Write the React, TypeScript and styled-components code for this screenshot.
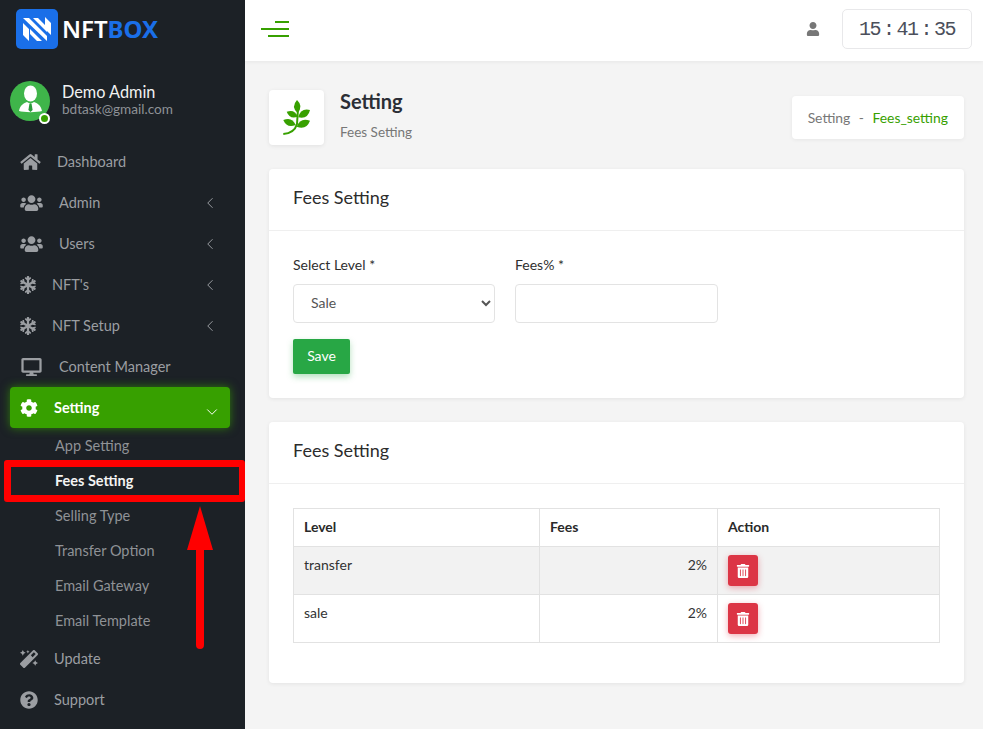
import React from "react";
import styled, { createGlobalStyle } from "styled-components";
import {
	FaHome,
	FaUsers,
	FaSnowflake,
	FaDesktop,
	FaCog,
	FaMagic,
	FaQuestionCircle,
	FaUser,
	FaTrashAlt,
} from "react-icons/fa";
import { ChevronLeft, ChevronDown } from "lucide-react";

const FONT = `Lato, "Noto Sans", "Liberation Sans", sans-serif`;

const GlobalStyle = createGlobalStyle`
	* { box-sizing: border-box; }
	html, body { margin: 0; padding: 0; background: #f4f4f4; }
	body { font-family: ${FONT}; }
`;

const Shell = styled.div`
	position: relative;
	display: flex;
	width: 983px;
	height: 729px;
	overflow: hidden;
`;

const Sidebar = styled.aside`
	flex: 0 0 245px;
	display: flex;
	flex-direction: column;
	background: #1c2126;
`;

const Brand = styled.div`
	display: flex;
	align-items: center;
	gap: 4px;
	height: 58px;
	padding-left: 16px;
`;

const BrandName = styled.span`
	font-family: "Noto Sans", sans-serif;
	font-size: 24px;
	line-height: 1;
	font-weight: 600;
	color: #fff;
	b {
		color: #1a6fe8;
		font-weight: 700;
	}
`;

const Profile = styled.div`
	display: flex;
	align-items: center;
	gap: 12px;
	margin-top: 22px;
	height: 42px;
	padding-left: 10px;
`;

const AvatarWrap = styled.div`
	position: relative;
	width: 40px;
	height: 40px;
`;

const OnlineDot = styled.span`
	position: absolute;
	right: 0;
	bottom: -3px;
	width: 11px;
	height: 11px;
	border-radius: 50%;
	background: #37a000;
	border: 2px solid #fff;
`;

const ProfileText = styled.div`
	padding-bottom: 2px;
`;

const ProfileName = styled.div`
	font-size: 16.3px;
	line-height: 18px;
	color: #f1f1f1;
`;

const ProfileMail = styled.div`
	font-size: 13.6px;
	line-height: 16px;
	color: #8e9297;
`;

const Nav = styled.nav`
	display: flex;
	flex-direction: column;
	margin-top: 19px;
`;

const NavItem = styled.div<{ $active?: boolean }>`
	display: flex;
	align-items: center;
	gap: 16px;
	height: 41px;
	margin: 0 15px 0 10px;
	padding: 0 11px 0 10px;
	border-radius: 4px;
	font-size: 14.5px;
	font-weight: ${(p) => (p.$active ? 700 : 400)};
	color: ${(p) => (p.$active ? "#fff" : "#9b9ea2")};
	background: ${(p) => (p.$active ? "#37a000" : "transparent")};
	box-shadow: ${(p) => (p.$active ? "0 0 10px rgba(55, 160, 0, 0.7)" : "none")};
`;

const NavIcon = styled.span<{ $w: number }>`
	display: flex;
	flex: none;
	svg {
		width: ${(p) => p.$w}px;
		height: 18px;
	}
`;

const NavLabel = styled.span`
	flex: 1;
`;

const OpenChevron = styled(ChevronDown)`
	margin: 8px -2px 0 2px;
`;

const SubItem = styled.div<{ $active?: boolean }>`
	display: flex;
	align-items: center;
	height: 35px;
	padding-left: 55px;
	font-size: 14.5px;
	font-weight: ${(p) => (p.$active ? 700 : 400)};
	color: ${(p) => (p.$active ? "#f4f4f4" : "#8f9296")};
`;

const Main = styled.main`
	flex: 1;
	display: flex;
	flex-direction: column;
	min-width: 0;
`;

const Topbar = styled.header`
	display: flex;
	align-items: center;
	height: 61px;
	padding: 0 11px 3px 16px;
	background: #fff;
	box-shadow: 0 1px 4px rgba(0, 0, 0, 0.06);
`;

const Burger = styled.div`
	display: flex;
	flex-direction: column;
	align-items: flex-end;
	gap: 5px;
	width: 28px;
	margin-right: auto;
`;

const BurgerLine = styled.span<{ $w: number }>`
	display: block;
	height: 2px;
	width: ${(p) => p.$w}px;
	background: #37a000;
`;

const UserIcon = styled.span`
	display: flex;
	color: #777;
	margin-right: 22px;
`;

const Clock = styled.div`
	display: flex;
	align-items: center;
	justify-content: center;
	gap: 3px;
	width: 130px;
	height: 40px;
	border: 1px solid #e8e8ea;
	border-radius: 5px;
	font-family: "Liberation Mono", monospace;
	font-size: 20px;
	letter-spacing: -1.5px;
	color: #4b4f5b;
`;

const Content = styled.div`
	display: flex;
	flex-direction: column;
	padding: 29px 19px 0 24px;
`;

const PageHead = styled.div`
	display: flex;
	align-items: center;
	height: 55px;
	margin-bottom: 24px;
`;

const IconTile = styled.div`
	display: flex;
	align-items: center;
	justify-content: center;
	width: 55px;
	height: 55px;
	margin-right: 16px;
	background: #fff;
	border-radius: 4px;
	box-shadow: 0 1px 4px rgba(0, 0, 0, 0.08);
`;

const HeadText = styled.div`
	flex: 1;
	padding-bottom: 6px;
`;

const PageTitle = styled.h1`
	margin: 0 0 10px;
	font-size: 20px;
	line-height: 24px;
	font-weight: 700;
	color: #2b2e36;
`;

const PageSub = styled.div`
	font-size: 13.5px;
	line-height: 18px;
	color: #777;
`;

const Crumbs = styled.div`
	display: flex;
	align-items: center;
	gap: 8.5px;
	height: 43px;
	padding: 0 16px;
	background: #fff;
	border-radius: 4px;
	font-size: 13.9px;
	color: #777;
	box-shadow: 0 1px 4px rgba(0, 0, 0, 0.06);
`;

const CrumbActive = styled.span`
	color: #37a000;
`;

const Card = styled.section`
	background: #fff;
	border-radius: 4px;
	margin-bottom: 24px;
	box-shadow: 0 1px 4px rgba(0, 0, 0, 0.07);
`;

const CardHead = styled.div`
	display: flex;
	align-items: center;
	height: 62px;
	padding: 0 24px 5px;
	border-bottom: 1px solid #efefef;
	font-size: 18px;
	color: #2c2c2c;
`;

const CardBody = styled.div<{ $bottom: number }>`
	padding: 24px 24px ${(p) => p.$bottom}px;
`;

const FormRow = styled.div`
	display: flex;
	gap: 20px;
	margin-bottom: 16px;
`;

const Field = styled.label<{ $w: number }>`
	display: flex;
	flex-direction: column;
	width: ${(p) => p.$w}px;
	font-size: 14px;
	line-height: 20px;
	color: #2f2f2f;
`;

const FieldLabel = styled.span`
	margin-bottom: 9px;
`;

const Select = styled.select`
	height: 39px;
	padding: 0 8px 2px 13px;
	border: 1px solid #e3e3e3;
	border-radius: 4px;
	background: #fff;
	font-family: ${FONT};
	font-size: 14px;
	color: #555;
`;

const Input = styled.input`
	height: 39px;
	border: 1px solid #e3e3e3;
	border-radius: 4px;
	background: #fff;
`;

const SaveButton = styled.button`
	display: block;
	width: 57px;
	height: 35px;
	padding: 0 0 2px;
	border: 0;
	border-radius: 2px;
	background: #28a745;
	color: #fff;
	font-family: ${FONT};
	font-size: 14px;
	box-shadow: 0 3px 6px rgba(40, 167, 69, 0.35);
`;

const Table = styled.table`
	width: 646px;
	border-collapse: collapse;
	table-layout: fixed;
	font-size: 14px;
	color: #333;
`;

const Th = styled.th<{ $w: number }>`
	width: ${(p) => p.$w}px;
	height: 38px;
	padding: 0 10px 2px;
	border: 1px solid #e2e2e2;
	text-align: left;
	font-weight: 700;
	color: #2a2a2a;
`;

const Row = styled.tr<{ $striped?: boolean }>`
	background: ${(p) => (p.$striped ? "#f2f2f2" : "#fff")};
`;

const Td = styled.td<{ $right?: boolean }>`
	height: 48px;
	padding: 8px 10px;
	border: 1px solid #e2e2e2;
	vertical-align: top;
	line-height: 20px;
	text-align: ${(p) => (p.$right ? "right" : "left")};
`;

const DeleteButton = styled.button`
	display: flex;
	align-items: center;
	justify-content: center;
	width: 30px;
	height: 31px;
	padding: 0;
	border: 0;
	border-radius: 3px;
	background: #dc3545;
	color: #fff;
	box-shadow: 0 2px 6px rgba(220, 53, 69, 0.4);
`;

// red marker drawn over the screenshot
const MarkBox = styled.div`
	position: absolute;
	left: 4px;
	top: 460px;
	width: 241px;
	height: 42px;
	border: 7px solid #ff0000;
	border-right-width: 6px;
	border-radius: 3px;
`;

const MarkArrow = styled.svg`
	position: absolute;
	left: 186px;
	top: 506px;
`;

const Logo = () => (
	<svg width="42" height="40" viewBox="0 0 42 40">
		<rect width="42" height="40" rx="5" fill="#1a6fe8" />
		<path
			d="M7 9h6l18 18v5zM17 9h5l9 9v5zM7 14l6 6v12l-6-6zM35 26l-6-6V8l6 6zM14 20l12 12h-5l-7-7z"
			fill="#fff"
		/>
	</svg>
);

const Avatar = () => (
	<svg width="40" height="40" viewBox="0 0 40 40">
		<circle cx="20" cy="20" r="20" fill="#3fb54a" />
		<ellipse cx="20.5" cy="12.5" rx="6.5" ry="8" fill="#fff" />
		<path d="M9 30c1-6 5-8 8-9l3.5 2 3.5-2c3 1 7 3 8 9-4 1.5-19 1.5-23 0z" fill="#fff" />
		<path d="M19.4 23h2.2l1 6-2.1 2-2.1-2z" fill="#2a9a3a" />
	</svg>
);

// each leaf runs from where it meets the stem out to its tip
const leaves = [
	[14.5, 13, 14, 0],
	[14.7, 16.7, 3.7, 11.7],
	[15.3, 17.3, 27, 10],
	[12.7, 25, 0.3, 20],
	[13.7, 26.7, 27, 20.7],
];

const leafPath = ([x1, y1, x2, y2]: number[]) => {
	const mx = (x1 + x2) / 2;
	const my = (y1 + y2) / 2;
	const nx = -(y2 - y1) * 0.5;
	const ny = (x2 - x1) * 0.5;
	return `M${x1} ${y1}Q${mx + nx} ${my + ny} ${x2} ${y2}Q${mx - nx} ${my - ny} ${x1} ${y1}z`;
};

const Sprig = () => (
	<svg width="28" height="35" viewBox="0 0 28 35" fill="#37a000">
		<path d="M0.3 34C7 33.5 12 31 14 24L15 9" fill="none" stroke="#37a000" strokeWidth="2" />
		{leaves.map((leaf) => (
			<path key={leaf.join()} d={leafPath(leaf)} />
		))}
	</svg>
);

const mainNav = [
	{ label: "Dashboard", icon: <FaHome />, w: 21 },
	{ label: "Admin", icon: <FaUsers />, w: 23, more: true },
	{ label: "Users", icon: <FaUsers />, w: 23, more: true },
	{ label: "NFT's", icon: <FaSnowflake />, w: 16, more: true },
	{ label: "NFT Setup", icon: <FaSnowflake />, w: 16, more: true },
	{ label: "Content Manager", icon: <FaDesktop />, w: 23 },
];

const subNav = ["App Setting", "Fees Setting", "Selling Type", "Transfer Option", "Email Gateway", "Email Template"];

const fees = [
	{ level: "transfer", fees: "2%" },
	{ level: "sale", fees: "2%" },
];

export default function App() {
	return (
		<Shell>
			<GlobalStyle />
			<Sidebar>
				<Brand>
					<Logo />
					<BrandName>
						NFT<b>BOX</b>
					</BrandName>
				</Brand>
				<Profile>
					<AvatarWrap>
						<Avatar />
						<OnlineDot />
					</AvatarWrap>
					<ProfileText>
						<ProfileName>Demo Admin</ProfileName>
						<ProfileMail>bdtask@gmail.com</ProfileMail>
					</ProfileText>
				</Profile>
				<Nav>
					{mainNav.map((item) => (
						<NavItem key={item.label}>
							<NavIcon $w={item.w}>{item.icon}</NavIcon>
							<NavLabel>{item.label}</NavLabel>
							{item.more && <ChevronLeft size={18} strokeWidth={1.3} />}
						</NavItem>
					))}
					<NavItem $active>
						<NavIcon $w={18}>
							<FaCog />
						</NavIcon>
						<NavLabel>Setting</NavLabel>
						<OpenChevron size={18} strokeWidth={1.3} />
					</NavItem>
					<div>
						{subNav.map((label) => (
							<SubItem key={label} $active={label === "Fees Setting"}>
								{label}
							</SubItem>
						))}
					</div>
					<NavItem>
						<NavIcon $w={18}>
							<FaMagic />
						</NavIcon>
						<NavLabel>Update</NavLabel>
					</NavItem>
					<NavItem>
						<NavIcon $w={18}>
							<FaQuestionCircle />
						</NavIcon>
						<NavLabel>Support</NavLabel>
					</NavItem>
				</Nav>
			</Sidebar>
			<Main>
				<Topbar>
					<Burger>
						<BurgerLine $w={14} />
						<BurgerLine $w={28} />
						<BurgerLine $w={21} />
					</Burger>
					<UserIcon>
						<FaUser size={14} />
					</UserIcon>
					<Clock>
						<span>15</span>
						<span>:</span>
						<span>41</span>
						<span>:</span>
						<span>35</span>
					</Clock>
				</Topbar>
				<Content>
					<PageHead>
						<IconTile>
							<Sprig />
						</IconTile>
						<HeadText>
							<PageTitle>Setting</PageTitle>
							<PageSub>Fees Setting</PageSub>
						</HeadText>
						<Crumbs>
							<span>Setting</span>
							<span>-</span>
							<CrumbActive>Fees_setting</CrumbActive>
						</Crumbs>
					</PageHead>
					<Card>
						<CardHead>Fees Setting</CardHead>
						<CardBody $bottom={24}>
							<FormRow>
								<Field $w={202}>
									<FieldLabel>Select Level *</FieldLabel>
									<Select defaultValue="sale">
										<option value="sale">Sale</option>
										<option value="transfer">Transfer</option>
									</Select>
								</Field>
								<Field $w={203}>
									<FieldLabel>Fees% *</FieldLabel>
									<Input />
								</Field>
							</FormRow>
							<SaveButton>Save</SaveButton>
						</CardBody>
					</Card>
					<Card>
						<CardHead>Fees Setting</CardHead>
						<CardBody $bottom={40}>
							<Table>
								<thead>
									<tr>
										<Th $w={246}>Level</Th>
										<Th $w={178}>Fees</Th>
										<Th $w={222}>Action</Th>
									</tr>
								</thead>
								<tbody>
									{fees.map((row, i) => (
										<Row key={row.level} $striped={i === 0}>
											<Td>{row.level}</Td>
											<Td $right>{row.fees}</Td>
											<Td>
												<DeleteButton>
													<FaTrashAlt size={14} />
												</DeleteButton>
											</Td>
										</Row>
									))}
								</tbody>
							</Table>
						</CardBody>
					</Card>
				</Content>
			</Main>
			<MarkBox />
			<MarkArrow width="28" height="144" viewBox="0 0 28 144">
				<path d="M14 0L27 44H18V139a4 4 0 0 1-8 0V44H1z" fill="#ff0000" />
			</MarkArrow>
		</Shell>
	);
}
